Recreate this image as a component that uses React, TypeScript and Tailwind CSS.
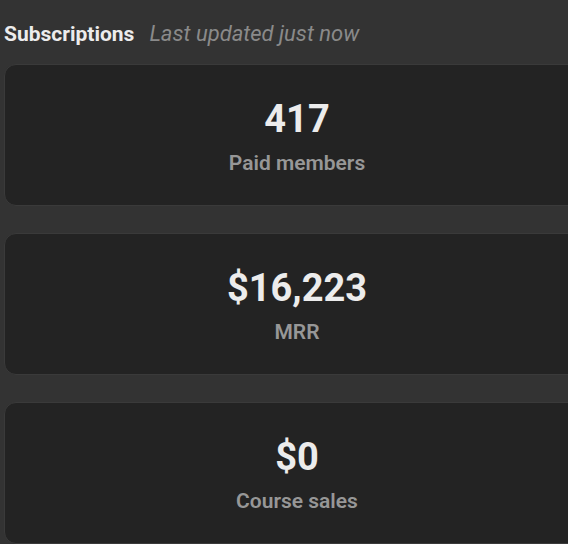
import React from 'react';

const stats = [
  { value: '417', label: 'Paid members' },
  { value: '$16,223', label: 'MRR' },
  { value: '$0', label: 'Course sales' },
];

const StatCard = ({ value, label }: { value: string; label: string }) => (
  <div className="w-[586px] shrink-0 rounded-xl border border-[#3a3a3a] bg-[#232323] pt-[31px] pb-[28px] flex flex-col items-center">
    <div className="text-[38px] leading-[46px] font-bold text-[#ececec]">{value}</div>
    <div className="mt-[7px] text-[21px] leading-7 font-semibold text-[#979797]">{label}</div>
  </div>
);

export default function App() {
  return (
    <div className="w-[568px] h-[544px] overflow-hidden bg-[#333333] font-['Roboto',sans-serif]">
      <div className="pl-1 pt-5 flex flex-col">
        <div className="flex items-baseline gap-[15px] leading-7">
          <span className="text-[21px] font-bold text-[#ececec]">Subscriptions</span>
          <span className="text-[22px] italic text-[#8a8a8a]">Last updated just now</span>
        </div>
        <div className="mt-4 flex flex-col gap-[27px]">
          {stats.map((s) => (
            <StatCard key={s.label} value={s.value} label={s.label} />
          ))}
        </div>
      </div>
    </div>
  );
}
